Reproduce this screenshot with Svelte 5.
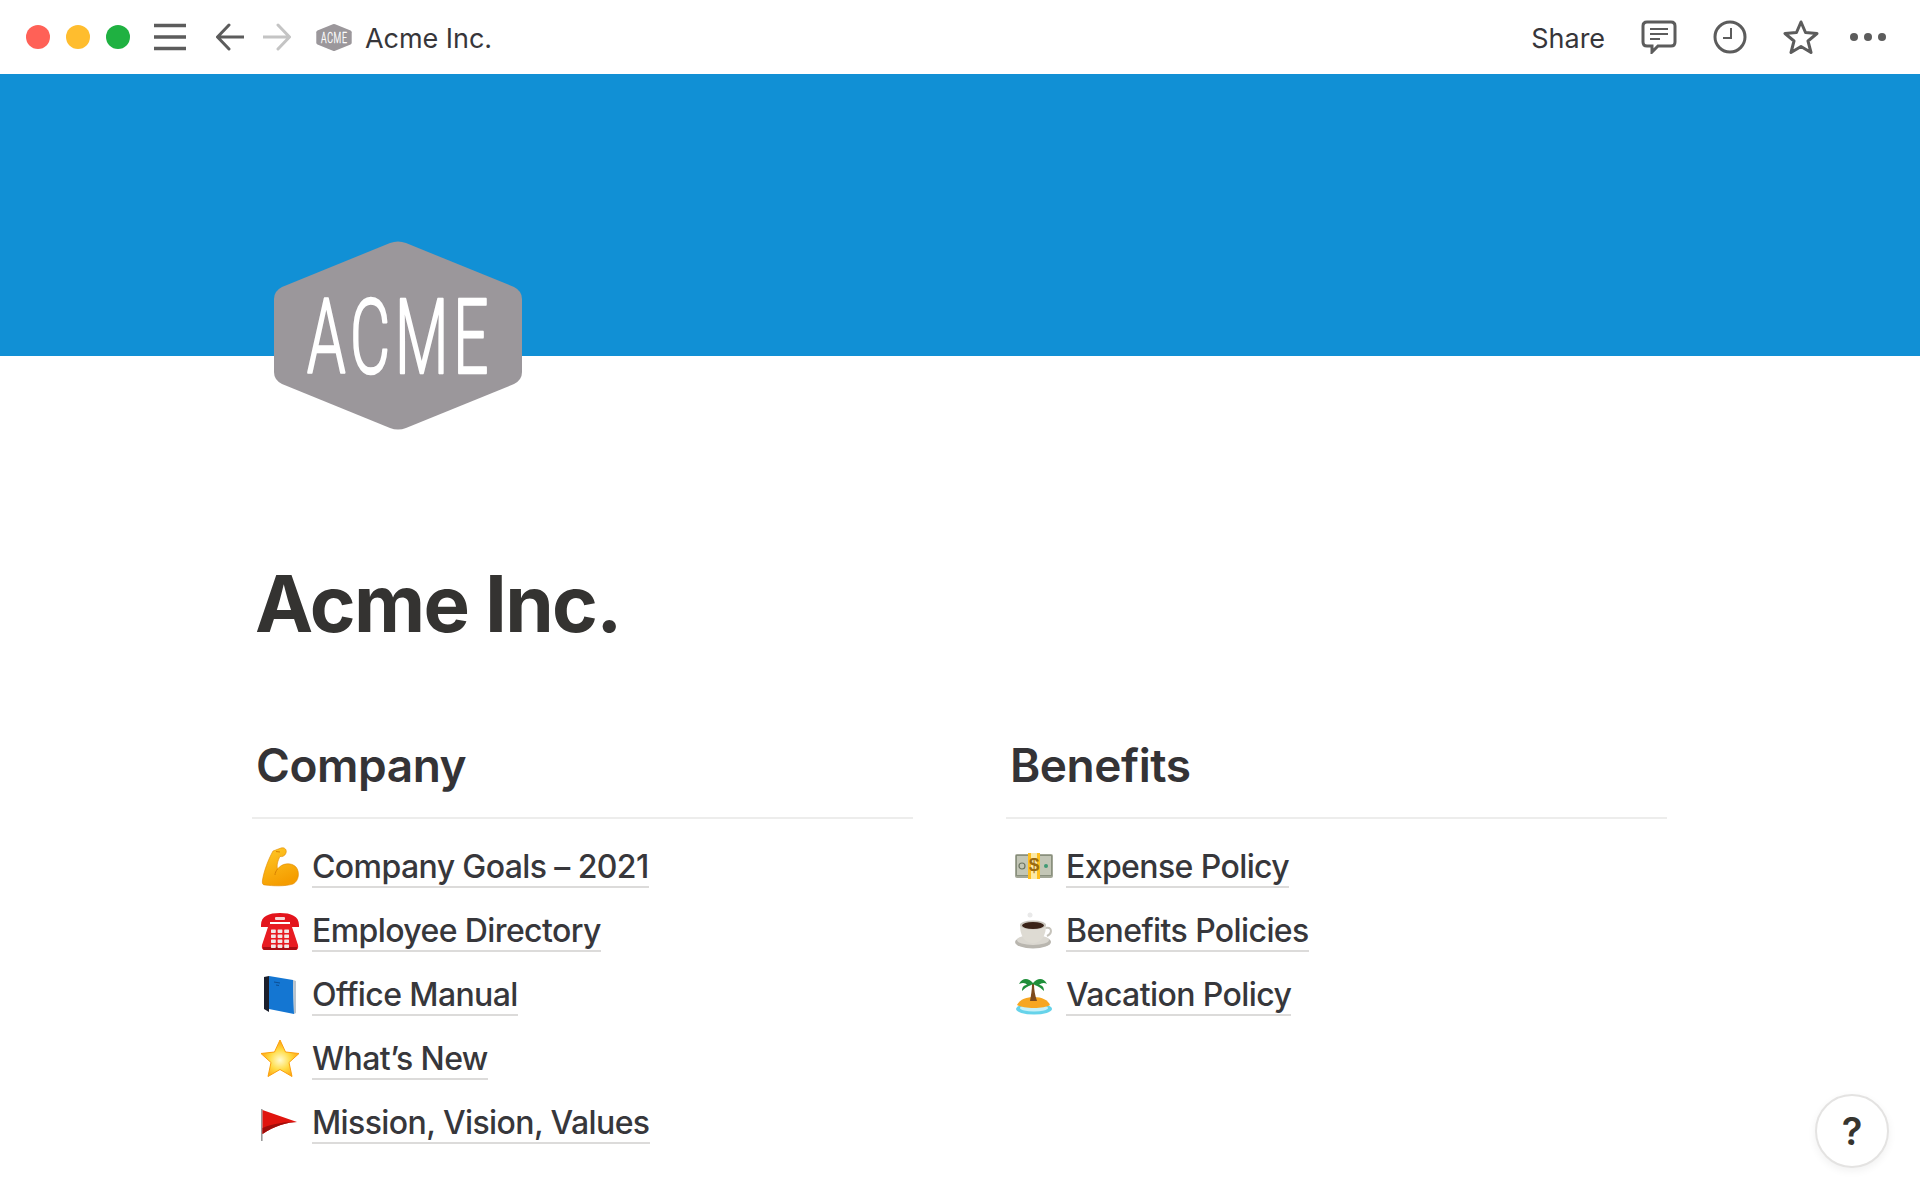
<script>
  const columns = [
    {
      title: 'Company',
      links: [
        { icon: 'arm', label: 'Company Goals – 2021' },
        { icon: 'phone', label: 'Employee Directory' },
        { icon: 'book', label: 'Office Manual' },
        { icon: 'star', label: 'What’s New' },
        { icon: 'flag', label: 'Mission, Vision, Values' }
      ]
    },
    {
      title: 'Benefits',
      links: [
        { icon: 'cash', label: 'Expense Policy' },
        { icon: 'coffee', label: 'Benefits Policies' },
        { icon: 'island', label: 'Vacation Policy' }
      ]
    }
  ];

  const keypad = [0, 1, 2, 3].flatMap((r) => [0, 1, 2].map((c) => ({ x: 11 + c * 6.6, y: 18.5 + r * 5 })));
</script>

{#snippet emoji(name)}
  <svg class="emoji" viewBox="0 0 40 40">
    {#if name === 'arm'}
      <defs>
        <linearGradient id="armFill" x1="0" y1="0" x2="0.4" y2="1">
          <stop offset="0" stop-color="#ffc928" />
          <stop offset="1" stop-color="#f59d00" />
        </linearGradient>
      </defs>
      <path d="M13 4 L21 1 C25 0 27 3 26 6 C25 9 22 10 20 9.500 C19 11 18 14 17.500 16 C17 18 17 20 17.500 22 C22 16 31 15 36 20 C40 25 39 34 33 37 C25 39.500 13 39 5 38 C2.500 38 2 36 2.500 33 C4 24 8 13 13 4 Z" fill="url(#armFill)" stroke="#e08a00" stroke-width="0.6" />
      <path d="M16 4.500 L20 5 M17.500 22 C16 24 15 26 15 28" fill="none" stroke="#d98200" stroke-width="1" />
    {:else if name === 'phone'}
      <path d="M1 14 C1 5 9 2 20 2 C31 2 39 5 39 14 L39 16 L30 16 L30 11 L10 11 L10 16 L1 16 Z" fill="#e3141c" />
      <rect x="15" y="6" width="10" height="3" rx="1" fill="#f6d6d6" />
      <path d="M9 13 L31 13 L38 34 Q39 39 35 39 L5 39 Q1 39 2 34 Z" fill="#e81c22" />
      <path d="M3 36 L37 36 L37 38 Q37 39 35 39 L5 39 Q3 39 3 38 Z" fill="#a90d13" />
      {#each keypad as key}
        <rect x={key.x} y={key.y} width="4.800" height="3.400" rx="0.6" fill="#f2e6e6" />
      {/each}
    {:else if name === 'book'}
      <path d="M4 2 L9 1 L9 37 L4 34 Z" fill="#1b1f2c" />
      <path d="M9 1 L33 5 L34 39 L9 34 Z" fill="#1476d2" />
      <path d="M33 5 L36 6 L36 38 L34 39 Z" fill="#b9c3cc" />
      <path d="M14 7 L20 8 M16 10 L19 10.500" stroke="#0d4f94" stroke-width="1" />
    {:else if name === 'star'}
      <defs>
        <radialGradient id="starFill" cx="0.5" cy="0.55" r="0.55">
          <stop offset="0" stop-color="#fffbd0" />
          <stop offset="0.5" stop-color="#ffdc45" />
          <stop offset="1" stop-color="#ff9f0a" />
        </radialGradient>
      </defs>
      <path d="M20 1 L25.500 13 L39 14.500 L29 23.500 L32 37.500 L20 30.500 L8 37.500 L11 23.500 L1 14.500 L14.500 13 Z" fill="url(#starFill)" stroke="#fb9f0c" stroke-width="1" stroke-linejoin="round" />
    {:else if name === 'flag'}
      <rect x="1" y="6" width="1.600" height="32" fill="#9a9a9a" />
      <path d="M2.500 7 L37 19 C28 19 14 23 2.500 31 Z" fill="#e0140e" />
      <path d="M2.500 25 C14 20 26 19 37 19 C28 19 14 23 2.500 31 Z" fill="#9f0d0a" />
    {:else if name === 'cash'}
      <rect x="1" y="7" width="38" height="24" rx="2" fill="#a3a797" />
      <rect x="2.500" y="8.500" width="35" height="20" fill="#c3c6b6" stroke="#7f8774" stroke-width="0.8" />
      <circle cx="8" cy="19" r="3" fill="none" stroke="#6d7563" stroke-width="1.200" />
      <circle cx="32" cy="19" r="2" fill="#3f9a74" />
      <rect x="14" y="6" width="12" height="26" fill="#fbe9a8" />
      <rect x="14" y="6" width="3" height="26" fill="#ffbf1f" />
      <rect x="23" y="6" width="3" height="26" fill="#ffbf1f" />
      <text x="20" y="24" class="dollar">$</text>
    {:else if name === 'coffee'}
      <ellipse cx="19" cy="31" rx="18" ry="6.500" fill="#b9b6af" />
      <ellipse cx="19" cy="29" rx="16" ry="5" fill="#dad7d0" />
      <circle cx="16" cy="4" r="2.500" fill="#e9e9e9" />
      <path d="M31 17 C38 15 39 22 33 25" fill="none" stroke="#c6c3bb" stroke-width="2" />
      <path d="M6 14 L32 14 C32 24 28 32 19 32 C10 32 6 24 6 14 Z" fill="#dedbd3" />
      <ellipse cx="19" cy="14" rx="13" ry="4.500" fill="#c9c6be" />
      <ellipse cx="19" cy="14.500" rx="11" ry="3.500" fill="#3a2318" />
    {:else if name === 'island'}
      <ellipse cx="20" cy="34" rx="18" ry="5.500" fill="#66d3ea" />
      <ellipse cx="20" cy="33" rx="14" ry="3.500" fill="#c6f0f7" />
      <path d="M3 30 C6 24 13 22 20 22 C28 22 34 25 36 30 C30 34 10 34 3 30 Z" fill="#f7a621" />
      <path d="M18 9 C18 15 17 20 16 26 L23 26 C21 20 20 15 20 9 Z" fill="#7c4a1e" />
      <path d="M19 8 C14 2 8 3 5 9 C9 7 12 8 13 10 C10 10 8 12 8 16 C12 12 15 11 19 9 C23 11 26 12 30 16 C30 12 28 10 25 10 C27 8 30 7 33 9 C30 3 24 2 19 8 Z" fill="#1f8f3a" />
    {/if}
  </svg>
{/snippet}

{#snippet logoShape()}
  <path d="M116 2 Q124 -1 132 2 L240 46 Q248 50 248 58 V131 Q248 139 240 143 L132 187 Q124 190 116 187 L8 143 Q0 139 0 131 V58 Q0 50 8 46 Z" fill="#9b979b" />
  <text class="mark" transform="translate(126 132) scale(0.6 1)">ACME</text>
{/snippet}

<div class="app">
  <header class="topbar">
    <div class="group">
      <div class="lights">
        <span class="light red"></span>
        <span class="light yellow"></span>
        <span class="light green"></span>
      </div>
      <svg class="menu" width="32" height="28" viewBox="0 0 32 28">
        <path d="M0 2.500 H32 M0 14 H32 M0 25.500 H32" />
      </svg>
      <svg class="nav" width="28" height="28" viewBox="0 0 28 28">
        <path d="M28 14 H2 M13 2 L1.500 14 L13 26" />
      </svg>
      <svg class="nav off" width="28" height="28" viewBox="0 0 28 28">
        <path d="M0 14 H26 M15 2 L26.500 14 L15 26" />
      </svg>
      <svg class="mini-logo" width="36" height="27" viewBox="0 0 248 189">
        {@render logoShape()}
      </svg>
      <span class="crumb">Acme Inc.</span>
    </div>
    <div class="group actions">
      <span class="share">Share</span>
      <svg class="tool wide" width="36" height="34" viewBox="0 0 36 34">
        <path d="M6 2 H30 Q34 2 34 6 V22 Q34 26 30 26 H17 L11 32 V26 H6 Q2 26 2 22 V6 Q2 2 6 2 Z" />
        <path class="thin" d="M9 9 H27 M9 14 H27 M9 19 H19" />
      </svg>
      <svg class="tool wide" width="34" height="34" viewBox="0 0 34 34">
        <circle cx="17" cy="17" r="15" />
        <path class="thin" d="M18 8 V18 H10" />
      </svg>
      <svg class="tool" width="36" height="34" viewBox="0 0 36 34">
        <path d="M18 2 L22.500 12.500 L34 13.500 L25 21 L28 32.500 L18 26.500 L8 32.500 L11 21 L2 13.500 L13.500 12.500 Z" stroke-linejoin="round" />
      </svg>
      <svg class="dots" width="36" height="10" viewBox="0 0 36 10">
        <circle cx="4" cy="5" r="4" />
        <circle cx="18" cy="5" r="4" />
        <circle cx="32" cy="5" r="4" />
      </svg>
    </div>
  </header>

  <div class="cover">
    <svg class="logo" width="248" height="189" viewBox="0 0 248 189">
      {@render logoShape()}
    </svg>
  </div>

  <main class="page">
    <h1>Acme Inc.</h1>
    <div class="columns">
      {#each columns as col}
        <section>
          <h2>{col.title}</h2>
          <ul>
            {#each col.links as link}
              <li>
                {@render emoji(link.icon)}
                <span class="link">{link.label}</span>
              </li>
            {/each}
          </ul>
        </section>
      {/each}
    </div>
  </main>

  <button class="help">?</button>
</div>

<style>
  :global(body) {
    background: #fff;
  }

  .app {
    position: relative;
    height: 1200px;
    overflow: hidden;
    font-family: Inter, 'Liberation Sans', sans-serif;
    color: #37352f;
  }

  .topbar {
    height: 74px;
    display: flex;
    align-items: center;
    justify-content: space-between;
    padding: 0 34px 0 26px;
    box-sizing: border-box;
  }

  .group {
    display: flex;
    align-items: center;
  }

  .lights {
    display: flex;
    gap: 16px;
    margin-right: 24px;
  }

  .light {
    width: 24px;
    height: 24px;
    border-radius: 50%;
  }

  .red { background: #ff6157; }
  .yellow { background: #ffbd2e; }
  .green { background: #1fb141; }

  .menu {
    margin-right: 30px;
  }

  .menu path {
    fill: none;
    stroke: #5c5c5c;
    stroke-width: 3.500;
  }

  .nav {
    margin-right: 19px;
  }

  .nav path {
    fill: none;
    stroke: #5c5c5c;
    stroke-width: 3;
    stroke-linecap: round;
    stroke-linejoin: round;
  }

  .nav.off path {
    stroke: #c4c4c4;
  }

  .mini-logo {
    margin: 0 13px 0 6px;
  }

  .crumb {
    font-size: 27px;
    margin-top: 2px;
    letter-spacing: -0.05px;
    color: #37363a;
  }

  .share {
    font-size: 27px;
    margin-top: 2px;
    margin-right: 36px;
    letter-spacing: -0.05px;
    color: #37363a;
  }

  .tool {
    margin-right: 31px;
  }

  .tool.wide {
    margin-right: 36px;
  }

  .tool path,
  .tool circle {
    fill: none;
    stroke: #5c5c5c;
    stroke-width: 3;
  }

  .tool path.thin {
    stroke-width: 2;
  }

  .dots {
    fill: #5c5c5c;
  }

  .cover {
    height: 282px;
    background: #1190d5;
    position: relative;
  }

  .logo {
    position: absolute;
    left: 274px;
    top: 167px;
  }

  .mark {
    fill: #fff;
    stroke: #fff;
    stroke-width: 2.500;
    stroke-linejoin: round;
    font: 300 103px Roboto, sans-serif;
    letter-spacing: 8px;
    text-anchor: middle;
  }

  .dollar {
    fill: #9a6a10;
    font: 700 19px 'Liberation Sans', sans-serif;
    text-anchor: middle;
  }

  .page {
    padding: 201px 0 0 252px;
  }

  h1 {
    margin: 0 0 0 3px;
    font-size: 78px;
    line-height: 94px;
    font-weight: 700;
    letter-spacing: -1.700px;
    color: #343331;
  }

  .columns {
    display: grid;
    grid-template-columns: 661px 661px;
    gap: 93px;
    margin-top: 86px;
  }

  h2 {
    margin: 0;
    padding: 0 0 24px 4px;
    font-size: 46px;
    line-height: 56px;
    font-weight: 600;
    letter-spacing: -0.450px;
    border-bottom: 2px solid #ededec;
    color: #343336;
  }

  ul {
    list-style: none;
    margin: 16px 0 0;
    padding: 0 0 0 8px;
  }

  li {
    height: 64px;
    display: flex;
    align-items: center;
    gap: 12px;
  }

  .emoji {
    width: 40px;
    height: 40px;
    flex: none;
  }

  .link {
    font-size: 32px;
    line-height: 39px;
    font-weight: 500;
    letter-spacing: -0.600px;
    border-bottom: 2px solid #dcdbda;
    margin-top: 1px;
    color: #37373b;
  }

  .help {
    position: absolute;
    right: 31px;
    bottom: 32px;
    width: 74px;
    height: 74px;
    border-radius: 50%;
    border: 2px solid #e4e3e2;
    background: #fff;
    box-shadow: 0 3px 8px rgba(0, 0, 0, 0.06);
    font: 600 38px Inter, sans-serif;
    color: #37352f;
    padding: 0;
  }
</style>
